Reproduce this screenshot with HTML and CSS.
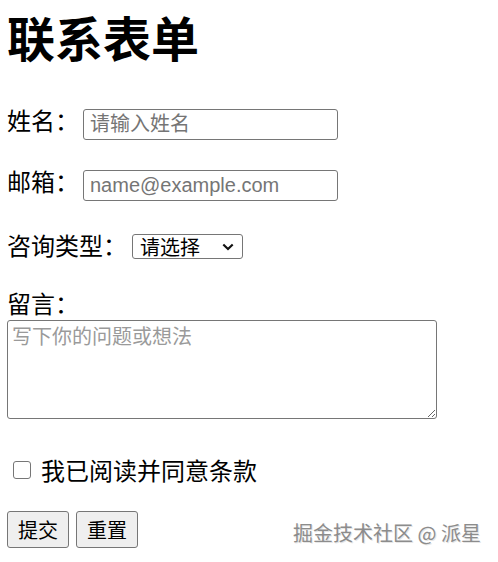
FILE: index.html
```html
<!DOCTYPE html>
<html lang="zh-CN">
<head>
<meta charset="utf-8">
<title>联系表单</title>
<link rel="stylesheet" href="styles.css">
</head>
<body>
<h1 class="title">联系表单</h1>
<form class="form">
  <div class="field">
    <label class="label label-row" for="name">姓名：</label>
    <input class="input" id="name" type="text" placeholder="请输入姓名">
  </div>
  <div class="field">
    <label class="label label-row" for="email">邮箱：</label>
    <input class="input" id="email" type="email" placeholder="name@example.com">
  </div>
  <div class="field">
    <label class="label label-select" for="type">咨询类型：</label>
    <span class="select-wrap">
      <select class="select" id="type">
        <option>请选择</option>
        <option>产品咨询</option>
        <option>技术支持</option>
      </select>
      <svg class="chevron" width="12" height="8" viewBox="0 0 12 8" aria-hidden="true"><path d="M1.3 1.4 L6 6.1 L10.7 1.4" fill="none" stroke="#111" stroke-width="2.1"/></svg>
    </span>
  </div>
  <div class="field-col">
    <label class="label label-block" for="msg">留言：</label>
    <textarea class="textarea" id="msg" placeholder="写下你的问题或想法"></textarea>
  </div>
  <div class="check-row">
    <input class="checkbox" id="agree" type="checkbox">
    <label class="label" for="agree">我已阅读并同意条款</label>
  </div>
  <div class="actions">
    <button class="btn" type="submit">提交</button>
    <button class="btn" type="reset">重置</button>
  </div>
</form>
<div class="watermark">掘金技术社区 @ 派星</div>
</body>
</html>
```

FILE: styles.css
```css
html, body {
  background: #fff;
}
body {
  margin: 8px 7px;
  font-family: "Noto Sans CJK SC", sans-serif;
  color: #000;
  position: relative;
  min-height: 546px;
}
.title {
  margin: 0 0 45px;
  font-size: 48px;
  line-height: 56px;
  font-weight: 700;
}
.form {
  display: flex;
  flex-direction: column;
}
.field {
  display: flex;
  align-items: center;
  gap: 4px;
  height: 31px;
  margin-bottom: 30px;
}
.label {
  font-size: 24px;
  line-height: 28px;
}
.label-row {
  margin-bottom: 9px;
}
.label-select {
  margin-bottom: 4px;
}
.input {
  box-sizing: border-box;
  width: 255px;
  height: 31px;
  margin: 0;
  padding: 0 6px;
  border: 1px solid #767676;
  border-radius: 3px;
  font-family: "Liberation Sans", "Noto Sans CJK SC", sans-serif;
  font-size: 20px;
  color: #000;
  background: #fff;
}
.input::placeholder {
  color: #757575;
}
.select-wrap {
  position: relative;
  display: inline-flex;
  margin-left: 1px;
}
.select {
  box-sizing: border-box;
  width: 111px;
  height: 25px;
  margin: 0;
  padding: 0 0 0 7px;
  border: 1px solid #767676;
  border-radius: 3px;
  background: #fff;
  appearance: none;
  -webkit-appearance: none;
  font-family: "Noto Sans CJK SC", sans-serif;
  font-size: 20px;
  line-height: 23px;
  color: #000;
}
.chevron {
  position: absolute;
  right: 9px;
  top: 9px;
  pointer-events: none;
}
.field-col {
  display: flex;
  flex-direction: column;
  margin-top: -3px;
}
.label-block {
  margin-bottom: 3px;
}
.textarea {
  box-sizing: border-box;
  width: 430px;
  height: 99px;
  margin: 0;
  padding: 2px 4px;
  border: 1px solid #767676;
  border-radius: 3px;
  font-family: "Noto Sans CJK SC", serif;
  font-size: 20px;
  line-height: 26px;
}
.textarea::placeholder {
  color: #9a9a9a;
}
.check-row {
  display: flex;
  align-items: center;
  gap: 10px;
  height: 31px;
  margin-top: 35px;
}
.checkbox {
  box-sizing: border-box;
  width: 18px;
  height: 18px;
  margin: 0 0 0 6px;
  appearance: none;
  -webkit-appearance: none;
  border: 1px solid #767676;
  border-radius: 3px;
  background: #fff;
}
.actions {
  display: flex;
  gap: 7px;
  margin-top: 26px;
}
.btn {
  box-sizing: border-box;
  width: 62px;
  height: 37px;
  margin: 0;
  padding: 0;
  border: 1px solid #767676;
  border-radius: 3px;
  background: #efefef;
  font-family: "Noto Sans CJK SC", sans-serif;
  font-size: 20px;
  color: #000;
}
.watermark {
  position: absolute;
  top: 513px;
  right: 10px;
  font-family: "Noto Sans CJK SC", sans-serif;
  font-size: 20px;
  line-height: 24px;
  color: #8c8c8c;
  text-shadow: 1px 1px 0 #e6e6e6, -1px -1px 0 #fff;
  white-space: nowrap;
}
```
